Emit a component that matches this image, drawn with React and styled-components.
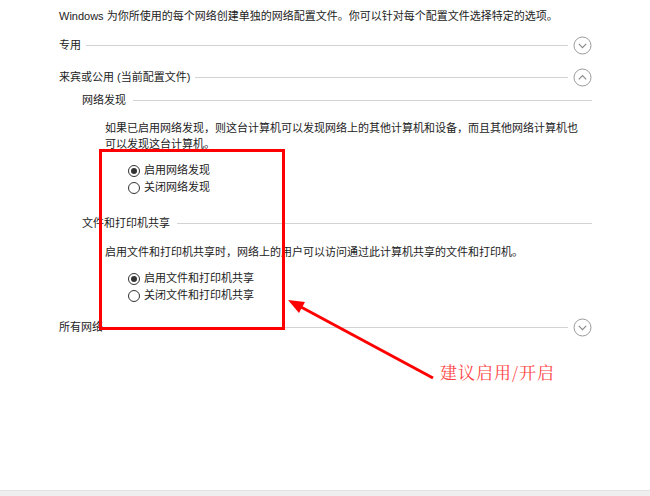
import React from "react";
import styled, { createGlobalStyle } from "styled-components";

const GlobalStyle = createGlobalStyle`
  html, body {
    margin: 0;
    padding: 0;
    background: #ffffff;
  }
  body {
    font-family: "Liberation Sans", "Noto Sans CJK SC", sans-serif;
    font-size: 11px;
    color: #222222;
  }
`;

const Page = styled.div`
  position: relative;
  width: 650px;
  height: 496px;
  display: flex;
  flex-direction: column;
  overflow: hidden;
`;

const Content = styled.div`
  flex: 1;
  padding: 8px 0 0 59px;
  width: 533px;
`;

const Intro = styled.div`
  line-height: 16px;
  white-space: nowrap;
`;

const SectionRow = styled.div`
  display: flex;
  align-items: center;
  height: 20px;
  margin-top: ${(p) => p.$top}px;
`;

const Label = styled.span`
  line-height: 16px;
  white-space: nowrap;
`;

const Rule = styled.div`
  flex: 1;
  height: 1px;
  background: #d3d3d3;
  margin-left: ${(p) => p.$gap || 5}px;
`;

const Toggle = styled.svg`
  width: 19px;
  height: 19px;
  margin-left: 5px;
  flex: none;
`;

const Group = styled.div`
  padding-left: 23px;
`;

const SubRow = styled.div`
  display: flex;
  align-items: center;
  height: 16px;
  margin-top: ${(p) => p.$top}px;
`;

const Para = styled.div`
  padding-left: 23px;
  line-height: 16px;
  margin-top: ${(p) => p.$top}px;
  white-space: nowrap;
`;

const Options = styled.div`
  padding-left: 46px;
  margin-top: ${(p) => p.$top}px;
`;

const Option = styled.label`
  display: flex;
  align-items: center;
  height: 17px;
  line-height: 17px;
`;

const Dot = styled.span`
  width: 10px;
  height: 10px;
  border: 1px solid #333333;
  border-radius: 50%;
  margin-right: 4px;
  display: flex;
  align-items: center;
  justify-content: center;
  background: #ffffff;
  &::after {
    content: "";
    width: 6px;
    height: 6px;
    border-radius: 50%;
    background: ${(p) => (p.$on ? "#333333" : "transparent")};
  }
`;

const Footer = styled.div`
  height: 5px;
  background: #efefef;
  border-top: 1px solid #e2e2e2;
`;

const Highlight = styled.div`
  position: absolute;
  left: 99px;
  top: 149px;
  width: 180px;
  height: 175px;
  border: 3px solid #ff0000;
  pointer-events: none;
`;

const Annotation = styled.svg`
  position: absolute;
  left: 0;
  top: 0;
  width: 650px;
  height: 496px;
  pointer-events: none;
`;

const Note = styled.div`
  position: absolute;
  left: 440px;
  top: 362px;
  font-family: "Noto Serif CJK SC", "Liberation Serif", "Noto Sans CJK SC", serif;
  font-size: 17px;
  line-height: 20px;
  letter-spacing: 1px;
  color: #ff4545;
  white-space: nowrap;
`;

function Chevron({ up }) {
  return (
    <Toggle viewBox="0 0 19 19">
      <circle cx="9.5" cy="9.5" r="8.5" fill="none" stroke="#9a9a9a" strokeWidth="1" />
      <path
        d={up ? "M5.8 11.3 L9.5 7.6 L13.2 11.3" : "M5.8 7.9 L9.5 11.6 L13.2 7.9"}
        fill="none"
        stroke="#8a8a8a"
        strokeWidth="1.2"
      />
    </Toggle>
  );
}

function Radio({ on, children }) {
  return (
    <Option>
      <Dot $on={on} />
      {children}
    </Option>
  );
}

export default function App() {
  return (
    <Page>
      <GlobalStyle />
      <Content>
        <Intro>Windows 为你所使用的每个网络创建单独的网络配置文件。你可以针对每个配置文件选择特定的选项。</Intro>

        <SectionRow $top={11}>
          <Label>专用</Label>
          <Rule />
          <Chevron />
        </SectionRow>

        <SectionRow $top={12}>
          <Label>来宾或公用 (当前配置文件)</Label>
          <Rule />
          <Chevron up />
        </SectionRow>

        <Group>
          <SubRow $top={5}>
            <Label>网络发现</Label>
            <Rule $gap={7} />
          </SubRow>
          <Para $top={12}>
            如果已启用网络发现，则这台计算机可以发现网络上的其他计算机和设备，而且其他网络计算机也
            <br />
            可以发现这台计算机。
          </Para>
          <Options $top={10}>
            <Radio on>启用网络发现</Radio>
            <Radio>关闭网络发现</Radio>
          </Options>

          <SubRow $top={19}>
            <Label>文件和打印机共享</Label>
            <Rule $gap={7} />
          </SubRow>
          <Para $top={13}>启用文件和打印机共享时，网络上的用户可以访问通过此计算机共享的文件和打印机。</Para>
          <Options $top={10}>
            <Radio on>启用文件和打印机共享</Radio>
            <Radio>关闭文件和打印机共享</Radio>
          </Options>
        </Group>

        <SectionRow $top={13}>
          <Label>所有网络</Label>
          <Rule />
          <Chevron />
        </SectionRow>
      </Content>
      <Footer />

      <Highlight />
      <Annotation viewBox="0 0 650 496">
        <line x1="433" y1="378" x2="301" y2="307" stroke="#ff0000" strokeWidth="3" />
        <polygon points="288,300 305,302 299,313" fill="#ff0000" />
      </Annotation>
      <Note>建议启用/开启</Note>
    </Page>
  );
}
